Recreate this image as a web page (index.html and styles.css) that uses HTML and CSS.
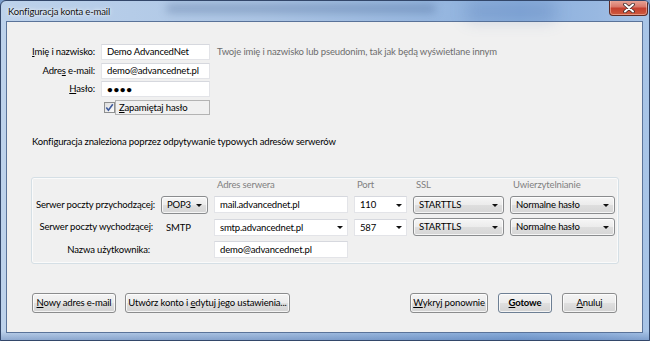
FILE: index.html
```html
<!DOCTYPE html>
<html lang="pl">
<head>
<meta charset="utf-8">
<title>Konfiguracja konta e-mail</title>
<link rel="stylesheet" href="styles.css">
</head>
<body>
<div class="window">
  <div class="titlebar">
    <div class="glass-blur"></div>
    <div class="glass-blur b2"></div>
    <span class="title">Konfiguracja konta e-mail</span>
  </div>
  <div class="close">
    <svg width="12" height="10" viewBox="0 0 12 10"><path d="M2 1.5 L10 8.5 M10 1.5 L2 8.5" stroke="#3b2a2a" stroke-width="3.6" stroke-linecap="round"/><path d="M2 1.5 L10 8.5 M10 1.5 L2 8.5" stroke="#ffffff" stroke-width="2" stroke-linecap="round"/></svg>
  </div>
  <div class="client">
    <div class="form">
      <div class="lbl"><u>I</u>mię i nazwisko:</div>
      <div class="field">Demo AdvancedNet</div>
      <div class="hint">Twoje imię i nazwisko lub pseudonim, tak jak będą wyświetlane innym</div>
      <div class="lbl">Adre<u>s</u> e-mail:</div>
      <div class="field">demo@advancednet.pl</div>
      <div></div>
      <div class="lbl"><u>H</u>asło:</div>
      <div class="field dots">••••</div>
      <div></div>
      <div></div>
      <div class="check-row">
        <span class="checkbox"><svg width="11" height="11" viewBox="0 0 11 11"><path d="M2.3 5.6 L4.4 8.2 L8.8 2.2" fill="none" stroke="#3d5a9c" stroke-width="1.6"/></svg></span>
        <span class="check-label"><u>Z</u>apamiętaj hasło</span>
      </div>
      <div></div>
    </div>

    <p class="status">Konfiguracja znaleziona poprzez odpytywanie typowych adresów serwerów</p>

    <div class="group">
      <div></div>
      <div></div>
      <div class="head">Adres serwera</div>
      <div class="head">Port</div>
      <div class="head">SSL</div>
      <div class="head">Uwierzytelnianie</div>

      <div class="rlbl">Serwer poczty przychodzącej:</div>
      <div class="drop">POP3<span class="arrow"></span></div>
      <div class="field">mail.advancednet.pl</div>
      <div class="field combo">110<span class="arrow"></span></div>
      <div class="drop">STARTTLS<span class="arrow"></span></div>
      <div class="drop">Normalne hasło<span class="arrow"></span></div>

      <div class="rlbl out">Serwer poczty wychodzącej:</div>
      <div class="proto">SMTP</div>
      <div class="field combo">smtp.advancednet.pl<span class="arrow"></span></div>
      <div class="field combo">587<span class="arrow"></span></div>
      <div class="drop">STARTTLS<span class="arrow"></span></div>
      <div class="drop">Normalne hasło<span class="arrow"></span></div>

      <div class="rlbl user">Nazwa użytkownika:</div>
      <div></div>
      <div class="field">demo@advancednet.pl</div>
    </div>

    <div class="buttons">
      <div class="btn-group">
        <div class="btn w-new"><u>N</u>owy adres e-mail</div>
        <div class="btn w-create">Utwórz konto i <u>e</u>dytuj jego ustawienia...</div>
      </div>
      <div class="btn-group right">
        <div class="btn w-detect"><u>W</u>ykryj ponownie</div>
        <div class="btn w-done default"><u>G</u>otowe</div>
        <div class="btn w-cancel"><u>A</u>nuluj</div>
      </div>
    </div>
  </div>
</div>
</body>
</html>
```
FILE: styles.css
```css
* { box-sizing: border-box; }
html, body { margin: 0; padding: 0; }
body {
  width: 650px;
  height: 341px;
  overflow: hidden;
  font-family: Lato, "Liberation Sans", sans-serif;
  font-size: 9.5px;
  letter-spacing: -0.15px;
  color: #000;
  background: #7b9dcb;
}
u { text-decoration-thickness: 1px; text-underline-offset: 1px; }

.window {
  position: relative;
  width: 650px;
  height: 341px;
  display: flex;
  flex-direction: column;
  border: 1px solid #33476a;
  border-radius: 6px 6px 0 0;
  padding: 0 6px 7px 5px;
  background:
    linear-gradient(180deg, rgba(255,255,255,0) 0, rgba(255,255,255,0) 330px, rgba(30,70,140,0.35) 341px),
    linear-gradient(90deg, #bdd2eb 0%, #adc6e5 40%, #8cb0dd 80%, #98b8e1 92%, #a9c5e7 100%);
  overflow: hidden;
}

.titlebar {
  position: relative;
  height: 20px;
  display: flex;
  align-items: center;
  padding-left: 2px;
}
.title {
  position: relative;
  font-size: 9.5px;
  color: #111;
  text-shadow: 0 0 5px rgba(255,255,255,0.95), 0 0 2px rgba(255,255,255,0.8);
}
.glass-blur {
  position: absolute;
  left: 160px;
  top: 3px;
  width: 270px;
  height: 9px;
  border-radius: 6px;
  background: rgba(50,80,130,0.3);
  filter: blur(4px);
}
.glass-blur.b2 {
  left: 460px;
  top: 0;
  width: 90px;
  height: 20px;
  background: rgba(40,80,150,0.18);
  filter: blur(8px);
}
.close {
  position: absolute;
  top: -1px;
  right: 1px;
  width: 39px;
  height: 16px;
  border: 1px solid #5e2b25;
  border-top: none;
  border-radius: 0 0 4px 4px;
  background: linear-gradient(180deg, #e9a99b 0%, #d9786a 45%, #c4402f 55%, #cf5b3f 100%);
  box-shadow: inset 0 0 0 1px rgba(255,220,210,0.45);
  display: flex;
  align-items: center;
  justify-content: center;
}

.client {
  flex: 1;
  background: #f0f0f0;
  border: 1px solid #5a7399;
  display: flex;
  flex-direction: column;
}

.form {
  display: grid;
  grid-template-columns: 88px 109px auto;
  grid-template-rows: 16px 16px 16px 15px;
  column-gap: 6px;
  row-gap: 2.5px;
  margin-top: 22px;
  align-items: center;
}
.lbl { text-align: right; line-height: 14px; }
.hint { color: #6d6d6d; line-height: 14px; padding-left: 1px; }

.field {
  height: 16px;
  background: #fff;
  border: 1px solid #e3e4e8;
  border-top-color: #d6d8de;
  padding-left: 5px;
  line-height: 14px;
  white-space: nowrap;
  position: relative;
}
.dots { font-weight: bold; letter-spacing: 0.6px; font-size: 10px; }

.check-row {
  display: flex;
  align-items: center;
  height: 15px;
  padding-left: 3px;
}
.checkbox {
  width: 11px;
  height: 11px;
  border: 1px solid #8e8f8f;
  background: linear-gradient(135deg, #dcdcdc, #fdfdfd);
  display: flex;
  position: relative;
}
.checkbox svg { position: absolute; left: -1px; top: -1px; }
.check-label {
  flex: 1;
  height: 15px;
  border: 1px solid #b3b3b3;
  line-height: 13px;
  padding-left: 3px;
}

.status {
  margin: 20.5px 0 0 25px;
  line-height: 14px;
  height: 14px;
}

.group {
  margin: 28px 0 0 24px;
  width: 588px;
  border: 1px solid #d5dfe5;
  border-radius: 3px;
  box-shadow: inset 0 0 0 1px #fafafa;
  display: grid;
  grid-template-columns: 123px 47px 134px 53px 91px 105px;
  grid-template-rows: 13px 18px 18px 18px;
  column-gap: 6px;
  row-gap: 4.5px;
  padding: 0 3px 4px 0;
  align-items: center;
}
.head { color: #808080; padding-left: 3px; line-height: 13px; }
.rlbl { text-align: right; line-height: 14px; white-space: nowrap; }
.rlbl.out { margin-right: 2px; }
.rlbl.user { margin-right: 5px; }
.proto { padding-left: 5px; }
.group .field { height: 17px; line-height: 15px; }

.drop {
  height: 18px;
  border: 1px solid #8a8c8e;
  border-radius: 3px;
  background: linear-gradient(180deg, #f6f6f6 0%, #ececec 48%, #dedede 52%, #d6d6d6 100%);
  box-shadow: inset 0 0 0 1px rgba(255,255,255,0.75);
  padding-left: 5px;
  line-height: 16px;
  position: relative;
  white-space: nowrap;
}
.arrow {
  position: absolute;
  right: 5px;
  top: 50%;
  margin-top: -1px;
  width: 0;
  height: 0;
  border-left: 3px solid transparent;
  border-right: 3px solid transparent;
  border-top: 3px solid #111;
}
.combo .arrow { right: 4px; }

.buttons {
  margin-top: 29.5px;
  padding: 0 25px;
  display: flex;
  justify-content: space-between;
}
.btn-group { display: flex; gap: 9px; }
.btn-group.right { gap: 10px; }
.btn {
  height: 20px;
  border: 1px solid #8b8c8d;
  border-radius: 3px;
  background: linear-gradient(180deg, #f4f4f4 0%, #ececec 48%, #dfdfdf 52%, #d3d3d3 100%);
  box-shadow: inset 0 0 0 1px rgba(255,255,255,0.75);
  text-align: center;
  line-height: 18px;
  white-space: nowrap;
}
.btn.default { font-weight: bold; border-color: #6d7f94; }
.w-new { width: 84px; }
.w-create { width: 165px; }
.w-detect { width: 78px; }
.w-done { width: 54px; }
.w-cancel { width: 55px; }
```
